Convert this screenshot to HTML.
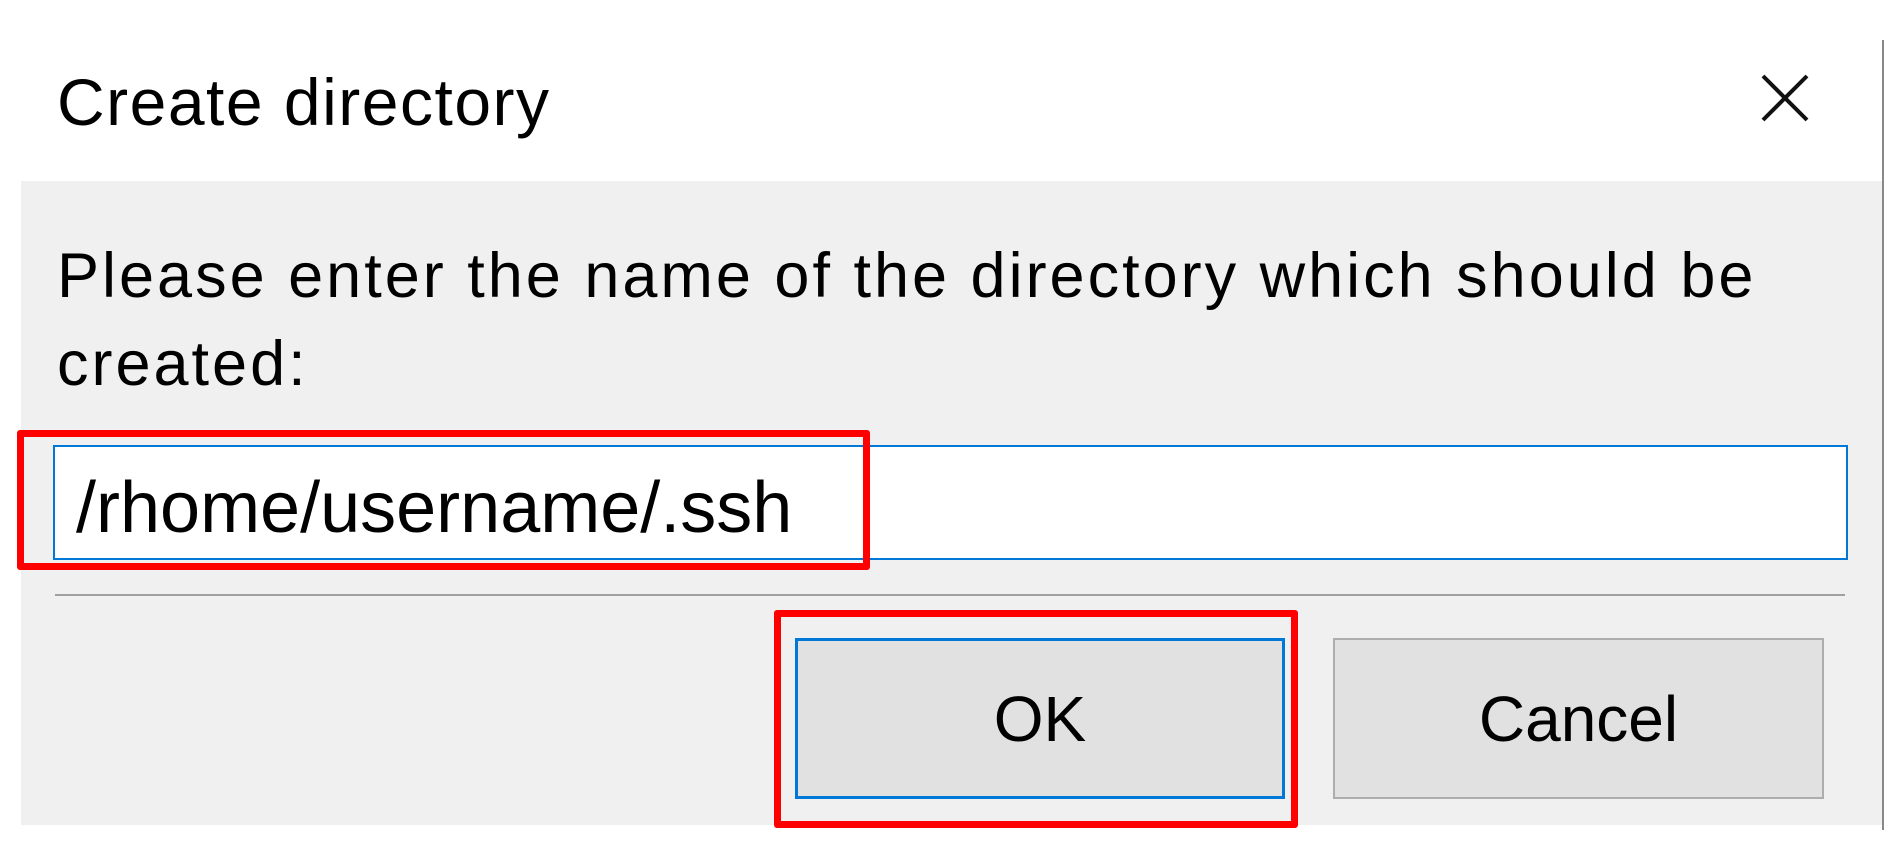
<!DOCTYPE html>
<html><head><style>
body{margin:0;width:1900px;height:842px;background:#fff;position:relative;overflow:hidden;font-family:"Liberation Sans",sans-serif;color:#000}
.a{position:absolute}
</style></head><body>
<div class="a" style="left:1882px;top:40px;width:2px;height:790px;background:#888"></div>
<div class="a" style="left:57px;top:62px;font-size:66px;line-height:80px;white-space:nowrap;letter-spacing:1.5px">Create directory</div>
<svg class="a" style="left:1758px;top:71px" width="54" height="54"><path d="M5 5L49 49M49 5L5 49" stroke="#111" stroke-width="4"/></svg>
<div class="a" style="left:21px;top:181px;width:1861px;height:644px;background:#f0f0f0"></div>
<div class="a" style="left:57px;top:232px;font-size:63px;line-height:88px;width:1820px;letter-spacing:3px">Please enter the name of the directory which should be<br>created:</div>
<div class="a" style="left:53px;top:445px;width:1795px;height:115px;box-sizing:border-box;border:2px solid #0078d7;background:#fff"></div>
<div class="a" style="left:76px;top:466px;font-size:72px;line-height:84px;white-space:nowrap">/rhome/username/.ssh</div>
<div class="a" style="left:17px;top:430px;width:853px;height:140px;box-sizing:border-box;border:7px solid #f00;border-radius:3px"></div>
<div class="a" style="left:55px;top:594px;width:1790px;height:2px;background:#a0a0a0"></div>
<div class="a" style="left:795px;top:638px;width:490px;height:161px;box-sizing:border-box;border:3px solid #0078d7;background:#e1e1e1;font-size:64px;display:flex;align-items:center;justify-content:center">OK</div>
<div class="a" style="left:1333px;top:638px;width:491px;height:161px;box-sizing:border-box;border:2px solid #adadad;background:#e1e1e1;font-size:64px;display:flex;align-items:center;justify-content:center">Cancel</div>
<div class="a" style="left:774px;top:610px;width:524px;height:218px;box-sizing:border-box;border:7px solid #f00;border-radius:3px"></div>
</body></html>
